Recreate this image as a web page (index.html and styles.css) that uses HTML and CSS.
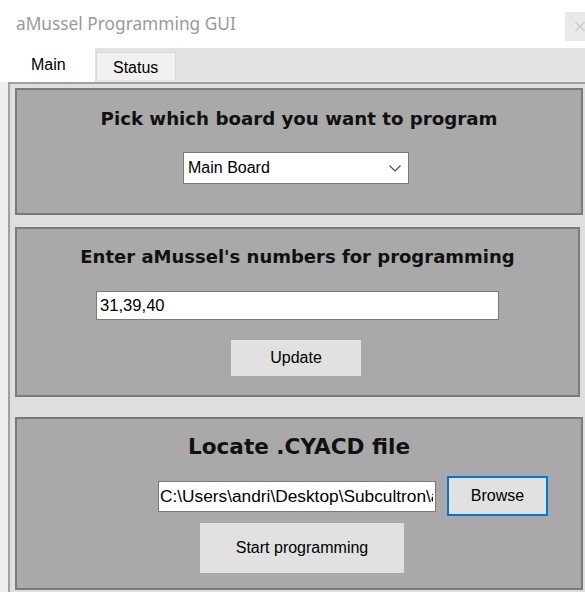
FILE: index.html
```html
<!DOCTYPE html>
<html lang="en">
<head>
<meta charset="utf-8">
<title>aMussel Programming GUI</title>
<link rel="stylesheet" href="styles.css">
</head>
<body>
  <header class="titlebar">
    <div class="title">aMussel Programming GUI</div>
    <div class="close">
      <svg width="30" height="29" viewBox="0 0 30 29"><path d="M10.5 10 L19.5 19 M19.5 10 L10.5 19" stroke="#cfcfcf" stroke-width="1.6" fill="none"/></svg>
    </div>
  </header>

  <nav class="tabstrip">
    <div class="tab tab-active">Main</div>
    <div class="tab tab-idle">Status</div>
  </nav>

  <main class="frame">
    <section class="panel panel-board">
      <h2 class="heading">Pick which board you want to program</h2>
      <div class="select">
        <span>Main Board</span>
        <svg class="chevron" width="12" height="7" viewBox="0 0 12 7"><path d="M0.5 0.5 L6 6 L11.5 0.5" fill="none" stroke="#444" stroke-width="1.1"/></svg>
      </div>
    </section>

    <section class="panel panel-numbers">
      <h2 class="heading">Enter aMussel's numbers for programming</h2>
      <input class="field field-numbers" type="text" value="31,39,40">
      <button class="btn btn-update">Update</button>
    </section>

    <section class="panel panel-file">
      <h2 class="heading heading-large">Locate .CYACD file</h2>
      <div class="file-row">
        <input class="field field-path" type="text" value="C:\Users\andri\Desktop\Subcultron\aMussel\firmware.cyacd">
        <button class="btn btn-browse">Browse</button>
      </div>
      <button class="btn btn-start">Start programming</button>
    </section>
  </main>
</body>
</html>
```

FILE: styles.css
```css
html, body {
  margin: 0;
  padding: 0;
}

body {
  width: 585px;
  height: 592px;
  overflow: hidden;
  background: #efefef;
  font-family: "Liberation Sans", Arial, sans-serif;
  font-size: 16px;
  color: #000;
}

/* window title bar */
.titlebar {
  height: 48px;
  background: #fff;
  display: flex;
  justify-content: space-between;
  align-items: flex-start;
  overflow: hidden;
}

.title {
  padding: 12px 0 0 16px;
  font-family: "Noto Sans", "Open Sans", sans-serif;
  font-size: 17.3px;
  line-height: 23px;
  color: #9a9a9a;
}

.close {
  margin-top: 12px;
  margin-right: -10px;
  width: 30px;
  height: 29px;
  background: #e9e9e9;
}

.close svg {
  display: block;
}

/* tab headers */
.tabstrip {
  height: 34px;
  box-sizing: border-box;
  background: #e3e3e3;
  border-left: 6px solid #fff;
  display: flex;
  align-items: flex-start;
}

.tab {
  box-sizing: border-box;
  line-height: 18px;
}

.tab-active {
  width: 89px;
  height: 34px;
  background: #fff;
  padding: 8px 0 0 25px;
}

.tab-idle {
  margin: 4px 0 0 1px;
  width: 80px;
  height: 28px;
  background: #f0f0f0;
  border: 1px solid #d9d9d9;
  border-bottom: none;
  padding: 6px 0 0 16px;
}

/* tab page */
.frame {
  margin-left: 8px;
  height: 510px;
  box-sizing: border-box;
  border-top: 2px solid #a0a0a0;
  border-left: 2px solid #a0a0a0;
  background: #dedede;
  padding: 4px 0 0 5px;
  display: flex;
  flex-direction: column;
  align-items: flex-start;
}

.panel {
  box-sizing: border-box;
  background: #a9a9a9;
  border: 2px solid #7a7a7a;
  display: flex;
  flex-direction: column;
  align-items: flex-start;
}

.panel-board {
  width: 568px;
  height: 127px;
  padding-top: 18px;
}

.panel-numbers {
  width: 565px;
  height: 170px;
  margin-top: 12px;
  padding-top: 17px;
}

.panel-file {
  width: 568px;
  height: 173px;
  margin-top: 20px;
  padding-top: 15px;
}

.heading {
  margin: 0;
  width: 100%;
  text-align: center;
  font-family: "DejaVu Sans", Verdana, sans-serif;
  font-weight: bold;
  font-size: 18.2px;
  line-height: 21px;
  color: #111;
}

.panel-numbers .heading {
  font-size: 18px;
}

.heading-large {
  font-size: 21.6px;
  line-height: 26px;
}

/* drop-down */
.select {
  margin: 23px 0 0 166px;
  width: 226px;
  height: 32px;
  box-sizing: border-box;
  background: #fff;
  border: 1px solid #7a7a7a;
  display: flex;
  align-items: center;
  justify-content: space-between;
  padding: 0 7px 0 4px;
}

.chevron {
  display: block;
}

/* text fields */
.field {
  box-sizing: border-box;
  margin: 0;
  background: #fff;
  border: 1px solid #7a7a7a;
  border-radius: 0;
  padding: 0 2px;
  font-family: "Liberation Sans", Arial, sans-serif;
  font-size: 16.6px;
  color: #000;
  outline: none;
}

.field-numbers {
  margin: 24px 0 0 79px;
  width: 403px;
  height: 29px;
  padding-left: 3px;
}

.field-path {
  width: 278px;
  height: 31px;
  padding-left: 1px;
  font-size: 17.3px;
}

/* buttons */
.btn {
  box-sizing: border-box;
  margin: 0;
  padding: 0;
  background: #e1e1e1;
  border: 1px solid #e1e1e1;
  border-radius: 0;
  font-family: "Liberation Sans", Arial, sans-serif;
  font-size: 16px;
  color: #000;
}

.btn-update {
  margin: 20px 0 0 214px;
  width: 130px;
  height: 36px;
}

.file-row {
  margin: 16px 0 0 141px;
  height: 40px;
  display: flex;
  align-items: center;
  gap: 11px;
}

.btn-browse {
  width: 101px;
  height: 40px;
  border: 2px solid #0078d7;
}

.btn-start {
  margin: 7px 0 0 183px;
  width: 204px;
  height: 50px;
}
```
